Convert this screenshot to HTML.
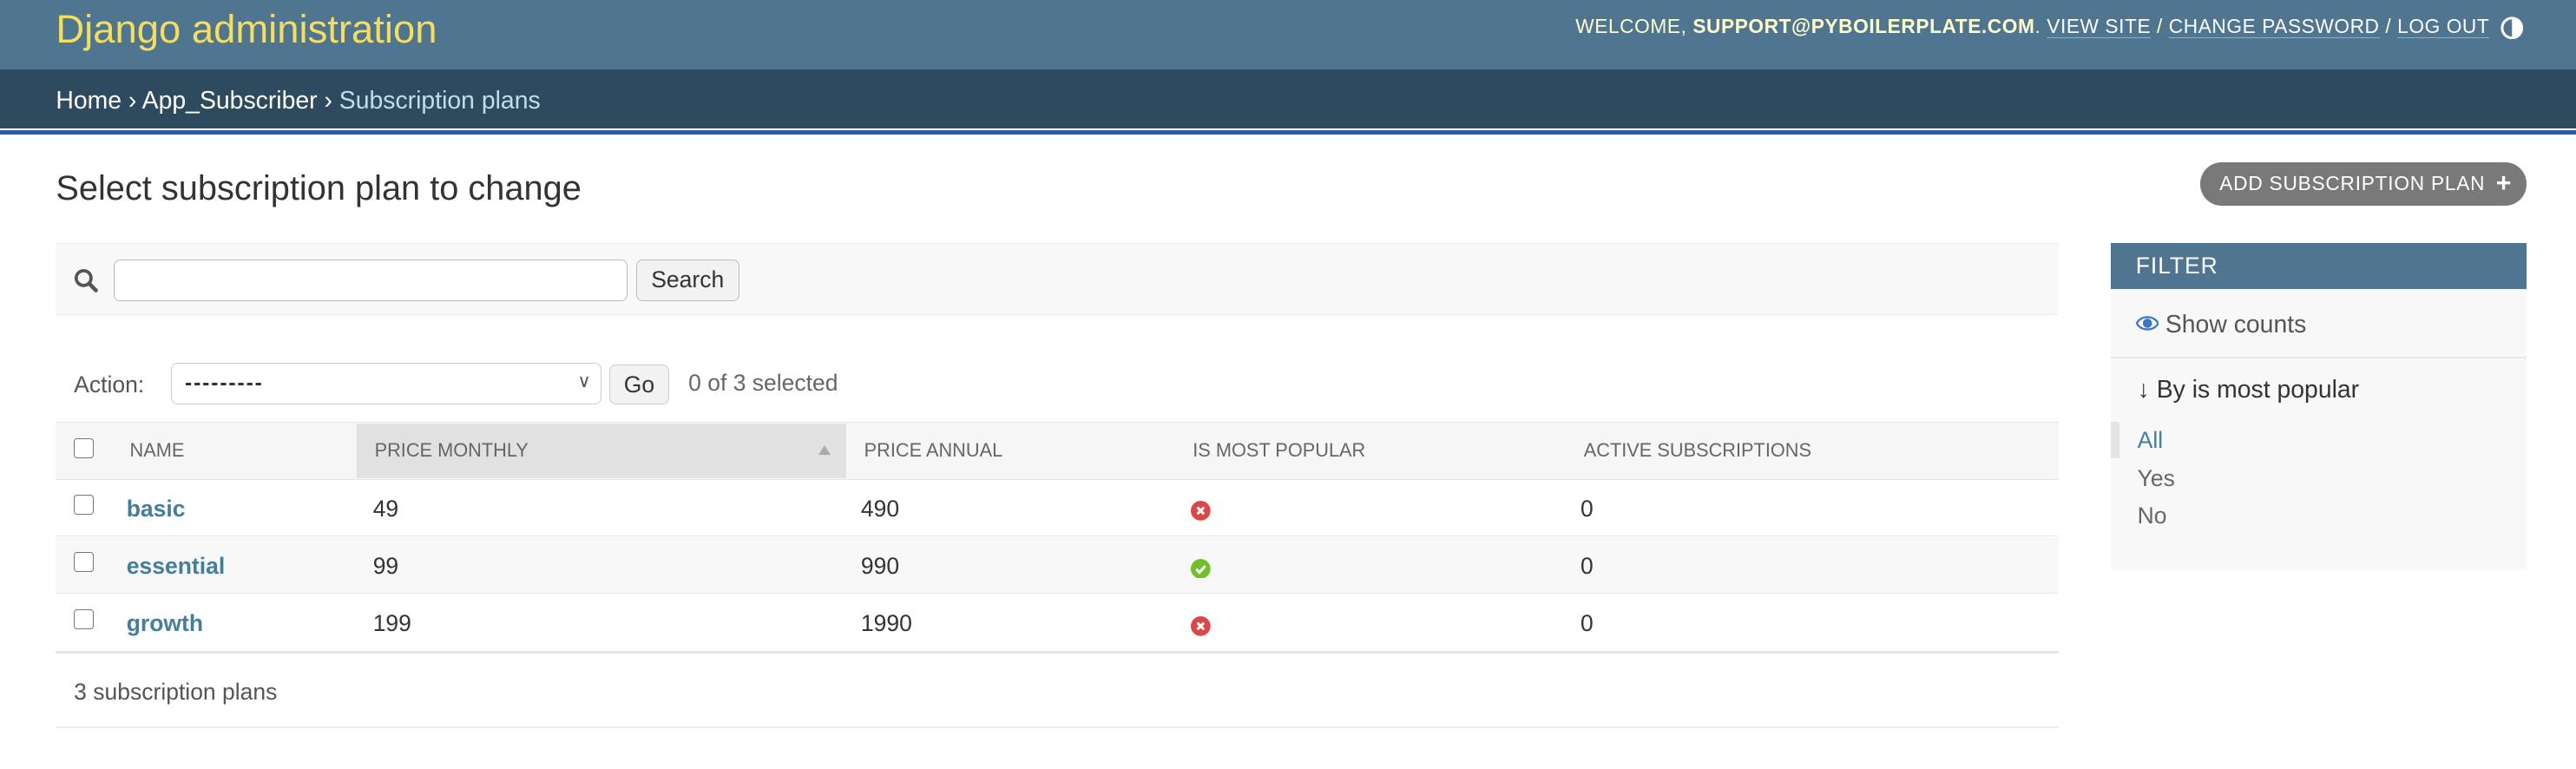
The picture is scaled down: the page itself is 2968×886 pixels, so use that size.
<!DOCTYPE html>
<html><head><meta charset="utf-8"><style>
html,body{margin:0;padding:0;background:#fff;overflow:hidden;}
body{width:2968px;height:886px;}
#w{zoom:1.8929;width:1568px;height:468px;position:relative;font-family:"Liberation Sans",sans-serif;color:#333;}
.a{position:absolute;white-space:nowrap;}
a{text-decoration:none;}
.cb{position:absolute;width:11px;height:11px;border:1px solid #767676;border-radius:2px;background:#fff;}
.th{position:absolute;top:257px;height:35px;line-height:35px;font-size:11.5px;color:#666;}
.row{position:absolute;left:34px;width:1219px;height:34px;border-bottom:1px solid #e8e8e8;}
.td{position:absolute;font-size:14px;line-height:35px;}
.lk{color:#447e9b;font-weight:bold;}
</style></head><body><div id="w">
<div class="a" style="left:0;top:0;width:1568px;height:42px;background:#4f7590"></div>
<div class="a" style="left:34px;top:4px;font-size:24px;color:#f5dd5d">Django administration</div>
<div class="a" style="left:959px;top:9px;font-size:12px;color:#ffc;letter-spacing:.3px">WELCOME, <b>SUPPORT@PYBOILERPLATE.COM</b>. <span style="color:#fff;border-bottom:1px solid #9ab">VIEW SITE</span> / <span style="color:#fff;border-bottom:1px solid #9ab">CHANGE PASSWORD</span> / <span style="color:#fff;border-bottom:1px solid #9ab">LOG OUT</span></div>
<svg class="a" style="left:1522px;top:10px" width="14" height="14" viewBox="0 0 14 14"><circle cx="7" cy="7" r="6" fill="none" stroke="#fff" stroke-width="1.6"/><path d="M7 1a6 6 0 0 1 0 12z" fill="#fff"/></svg>
<div class="a" style="left:0;top:42px;width:1568px;height:36px;background:#2e4a5e"></div>
<div class="a" style="left:34px;top:53px;font-size:15px;color:#fff">Home › App_Subscriber › <span style="color:#c4dce8">Subscription plans</span></div>
<div class="a" style="left:0;top:79px;width:1568px;height:3px;background:#2c5aa8"></div>
<div class="a" style="left:34px;top:103px;font-size:21px;color:#333">Select subscription plan to change</div>
<div class="a" style="left:1339px;top:99px;width:199px;height:26px;border-radius:13px;background:#797979;color:#fff;font-size:12px;line-height:26px;letter-spacing:.4px"><span style="margin-left:12px">ADD SUBSCRIPTION PLAN</span><span style="position:absolute;right:9px;top:0;font-weight:bold;font-size:16px">+</span></div>
<div class="a" style="left:34px;top:148px;width:1219px;height:44px;background:#f8f8f8;border-top:1px solid #eee;border-bottom:1px solid #eee;box-sizing:border-box"></div>
<svg class="a" style="left:45px;top:163px" width="15" height="15" viewBox="0 0 15 15"><circle cx="6" cy="6" r="4.5" fill="none" stroke="#555" stroke-width="2"/><path d="M9.5 9.5L13.5 13.5" stroke="#555" stroke-width="2.4" stroke-linecap="round"/></svg>
<div class="a" style="left:69px;top:158px;width:312px;height:24px;border:1px solid #bbb;border-radius:4px;background:#fff"></div>
<div class="a" style="left:387px;top:158px;width:62px;height:24px;border:1px solid #bbb;border-radius:4px;background:#f2f2f2;font-size:14px;line-height:24px;text-align:center;color:#333">Search</div>
<div class="a" style="left:45px;top:226px;font-size:14px;color:#555">Action:</div>
<div class="a" style="left:104px;top:221px;width:261px;height:24px;border:1px solid #ccc;border-radius:4px;background:#fff;font-size:13px;line-height:24px"><span style="margin-left:8px;font-weight:bold;letter-spacing:1px">---------</span><span style="position:absolute;right:6px;top:-1px;font-size:11px;color:#555">&#8744;</span></div>
<div class="a" style="left:371px;top:222px;width:35px;height:23px;border:1px solid #ccc;border-radius:4px;background:#f2f2f2;font-size:14px;line-height:24px;text-align:center">Go</div>
<div class="a" style="left:419px;top:225px;font-size:14px;color:#666">0 of 3 selected</div>
<div class="a" style="left:34px;top:257px;width:1219px;height:35px;background:#f6f6f6;border-top:1px solid #e6e6e6;border-bottom:1px solid #e6e6e6;box-sizing:border-box"></div>
<div class="a" style="left:217px;top:258px;width:298px;height:33px;background:#e1e1e1"></div>
<div class="cb" style="left:45px;top:267px"></div>
<div class="th" style="left:79px">NAME</div>
<div class="th" style="left:228px">PRICE MONTHLY</div>
<div class="a" style="left:498px;top:271px;width:0;height:0;border-left:4px solid transparent;border-right:4px solid transparent;border-bottom:6px solid #aaa"></div>
<div class="th" style="left:526px">PRICE ANNUAL</div>
<div class="th" style="left:726px">IS MOST POPULAR</div>
<div class="th" style="left:964px">ACTIVE SUBSCRIPTIONS</div>
<div class="row" style="top:292px"></div>
<div class="row" style="top:327px;background:#f8f8f8"></div>
<div class="row" style="top:362px;border-bottom:2px solid #e6e6e6"></div>
<div class="cb" style="left:45px;top:301px"></div>
<div class="cb" style="left:45px;top:336px"></div>
<div class="cb" style="left:45px;top:371px"></div>
<div class="td lk" style="left:77px;top:292px">basic</div>
<div class="td lk" style="left:77px;top:327px">essential</div>
<div class="td lk" style="left:77px;top:362px">growth</div>
<div class="td" style="left:227px;top:292px">49</div><div class="td" style="left:524px;top:292px">490</div><div class="td" style="left:962px;top:292px">0</div>
<div class="td" style="left:227px;top:327px">99</div><div class="td" style="left:524px;top:327px">990</div><div class="td" style="left:962px;top:327px">0</div>
<div class="td" style="left:227px;top:362px">199</div><div class="td" style="left:524px;top:362px">1990</div><div class="td" style="left:962px;top:362px">0</div>
<svg class="a" style="left:725px;top:305px" width="12" height="12" viewBox="0 0 12 12"><circle cx="6" cy="6" r="6" fill="#dd4646"/><path d="M4 4l4 4M8 4l-4 4" stroke="#fff" stroke-width="1.6"/></svg>
<svg class="a" style="left:725px;top:340px" width="12" height="12" viewBox="0 0 12 12"><circle cx="6" cy="6" r="6" fill="#70bf2b"/><path d="M3.3 6.2l2 2 3.5-4" stroke="#fff" stroke-width="1.6" fill="none"/></svg>
<svg class="a" style="left:725px;top:375px" width="12" height="12" viewBox="0 0 12 12"><circle cx="6" cy="6" r="6" fill="#dd4646"/><path d="M4 4l4 4M8 4l-4 4" stroke="#fff" stroke-width="1.6"/></svg>
<div class="a" style="left:45px;top:413px;font-size:14px;color:#555">3 subscription plans</div>
<div class="a" style="left:34px;top:442px;width:1219px;height:1px;background:#eee"></div>
<div class="a" style="left:1285px;top:148px;width:253px;height:199px;background:#f8f8f8"></div>
<div class="a" style="left:1285px;top:148px;width:253px;height:28px;background:#4f7590;color:#fff;font-size:14px;line-height:28px;letter-spacing:.5px"><span style="margin-left:15px">FILTER</span></div>
<svg class="a" style="left:1300px;top:192px" width="14" height="10" viewBox="0 0 14 10"><path d="M0.5 5C3 0 11 0 13.5 5C11 10 3 10 0.5 5Z" fill="#fff" stroke="#3a76c4" stroke-width="1.2"/><circle cx="7" cy="5" r="2.8" fill="#3a76c4"/></svg>
<div class="a" style="left:1318px;top:189px;font-size:15px;color:#555">Show counts</div>
<div class="a" style="left:1285px;top:217px;width:253px;height:1px;background:#e6e6e6"></div>
<div class="a" style="left:1301px;top:229px;font-size:15px;color:#333"><span style="color:#1e3a5f;font-weight:bold">↓</span> By is most popular</div>
<div class="a" style="left:1285px;top:257px;width:5px;height:22px;background:#e4e4e4"></div>
<div class="a" style="left:1301px;top:260px;font-size:14px;color:#447e9b">All</div>
<div class="a" style="left:1301px;top:283px;font-size:14px;color:#666">Yes</div>
<div class="a" style="left:1301px;top:306px;font-size:14px;color:#666">No</div>
</div></body></html>
